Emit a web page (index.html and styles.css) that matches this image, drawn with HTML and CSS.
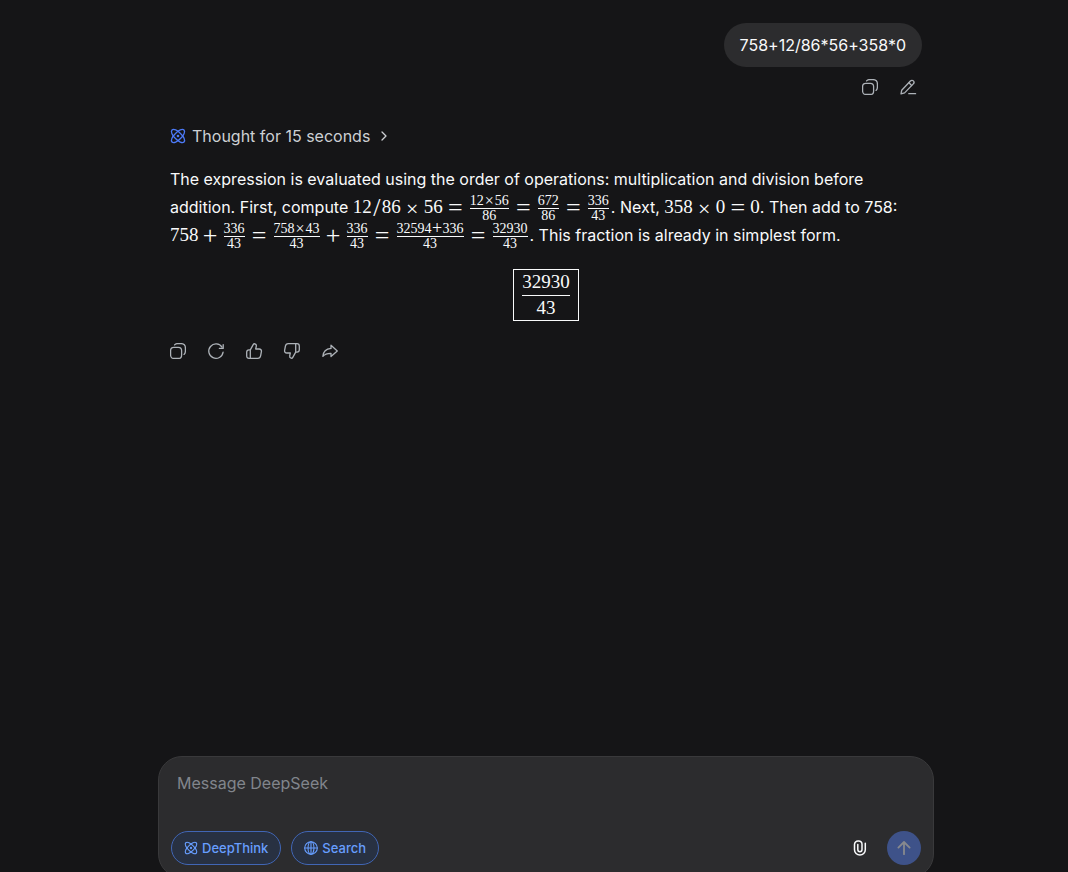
FILE: index.html
```html
<!DOCTYPE html>
<html lang="en">
<head>
    <meta charset="UTF-8">
    <meta name="viewport" content="width=device-width, initial-scale=1.0">
    <title>DeepSeek</title>
    <link rel="stylesheet" href="styles.css">
</head>
<body>

<!-- Shared icons -->
<svg class="sprite" aria-hidden="true">
    <symbol id="icon-atom" viewBox="0 0 16 16">
        <path d="M2 2C3.6 0.4 7.4 2.3 10.5 5.5C13.7 8.6 15.6 12.4 14 14C12.4 15.6 8.6 13.7 5.5 10.5C2.3 7.4 0.4 3.6 2 2Z"/>
        <path d="M14 2C15.6 3.6 13.7 7.4 10.5 10.5C7.4 13.7 3.6 15.6 2 14C0.4 12.4 2.3 8.6 5.5 5.5C8.6 2.3 12.4 0.4 14 2Z"/>
        <circle class="dot" cx="8" cy="8" r="1.3"/>
    </symbol>
    <symbol id="icon-copy" viewBox="0 0 16 16">
        <rect x="0.6" y="4.4" width="11" height="11" rx="3.2"/>
        <path d="M4.6 1.9C5.3 1 6.3 0.6 7.5 0.6H11C13.6 0.6 15.4 2.4 15.4 5V8.2C15.4 9.6 14.9 10.7 14 11.4"/>
    </symbol>
</svg>

<div class="page">
    <main class="chat">
        <div class="question">
            <div class="bubble">758+12/86*56+358*0</div>
            <div class="actions">
                <button class="icon-btn" aria-label="Copy"><svg class="icon"><use href="#icon-copy"/></svg></button>
                <button class="icon-btn" aria-label="Edit">
                    <svg class="icon" viewBox="0 0 16 16">
                        <path d="M1 14.8L1.7 11.2L10.4 2C11.3 1.1 12.6 1.1 13.4 1.9C14.2 2.7 14.2 4 13.3 4.9L4.6 13.9L1 14.8Z"/>
                        <path d="M9 3.8L11.6 6.5M8.8 14.7H15.6"/>
                    </svg>
                </button>
            </div>
        </div>

        <div class="answer">
            <button class="thought">
                <svg class="icon atom"><use href="#icon-atom"/></svg>
                Thought for 15 seconds
                <svg class="chevron" viewBox="0 0 6 10"><path d="M1 1L5 5L1 9"/></svg>
            </button>

            <p class="text">The expression is evaluated using the order of operations: multiplication and division before addition. First, compute
                <span class="math">12<span class="slash">/</span>86<span class="bin times">×</span>56<span class="rel">=</span></span><span class="math"><span class="frac"><span class="num">12<span class="bin times">×</span>56</span><span class="den">86</span></span><span class="rel">=</span></span><span class="math"><span class="frac"><span class="num">672</span><span class="den">86</span></span><span class="rel">=</span></span><span class="math"><span class="frac"><span class="num">336</span><span class="den">43</span></span></span>. Next,
                <span class="math">358<span class="bin times">×</span>0<span class="rel">=</span>0</span>. Then add to 758:
                <span class="math">758<span class="bin">+</span></span><span class="math"><span class="frac"><span class="num">336</span><span class="den">43</span></span><span class="rel">=</span></span><span class="math"><span class="frac"><span class="num">758<span class="bin times">×</span>43</span><span class="den">43</span></span><span class="bin">+</span></span><span class="math"><span class="frac"><span class="num">336</span><span class="den">43</span></span><span class="rel">=</span></span><span class="math"><span class="frac"><span class="num">32594<span class="bin">+</span>336</span><span class="den">43</span></span><span class="rel">=</span></span><span class="math"><span class="frac"><span class="num">32930</span><span class="den">43</span></span></span>. This fraction is already in simplest form.</p>

            <div class="result">
                <span class="boxed"><span class="num">32930</span><span class="den">43</span></span>
            </div>

            <div class="actions">
                <button class="icon-btn" aria-label="Copy"><svg class="icon"><use href="#icon-copy"/></svg></button>
                <button class="icon-btn" aria-label="Regenerate">
                    <svg class="icon" viewBox="0 0 16 16">
                        <path d="M15.1 9.2A7.2 7.2 0 1 1 14 4.2"/>
                        <path d="M15.2 1.6V5.4H11.4"/>
                    </svg>
                </button>
                <button class="icon-btn" aria-label="Like">
                    <svg class="icon" viewBox="0 0 16 16">
                        <path d="M4.3 6.9L7.2 1.6C7.6 0.9 8.2 0.6 8.9 0.8C10 1.1 10.5 2 10.3 3.1L9.7 6H13.2C14.7 6 15.7 7.2 15.4 8.6L14.6 12.9C14.3 14.4 13.2 15.3 11.7 15.3H3C1.6 15.3 0.7 14.4 0.7 13V9.2C0.7 7.8 1.6 6.9 3 6.9H4.3ZM4.3 6.9V15.3"/>
                    </svg>
                </button>
                <button class="icon-btn" aria-label="Dislike">
                    <svg class="icon" viewBox="0 0 16 16">
                        <path d="M11.7 9.1L8.8 14.4C8.4 15.1 7.8 15.4 7.1 15.2C6 14.9 5.5 14 5.7 12.9L6.3 10H2.8C1.3 10 0.3 8.8 0.6 7.4L1.4 3.1C1.7 1.6 2.8 0.7 4.3 0.7H13C14.4 0.7 15.3 1.6 15.3 3V6.8C15.3 8.2 14.4 9.1 13 9.1H11.7ZM11.7 9.1V0.7"/>
                    </svg>
                </button>
                <button class="icon-btn" aria-label="Share">
                    <svg class="icon" viewBox="0 0 16 16">
                        <path d="M9 2.2L15.3 7.9L9 13.5V10.3C5.4 10.2 2.9 11 0.9 13.4C1.2 8.8 4 5.8 9 5.4V2.2Z"/>
                    </svg>
                </button>
            </div>
        </div>
    </main>

    <form class="composer">
        <textarea class="message" rows="1" placeholder="Message DeepSeek" aria-label="Message DeepSeek"></textarea>
        <div class="toolbar">
            <button type="button" class="toggle"><svg class="icon"><use href="#icon-atom"/></svg>DeepThink</button>
            <button type="button" class="toggle">
                <svg class="icon" viewBox="0 0 16 16">
                    <circle cx="8" cy="8" r="7.2"/>
                    <ellipse cx="8" cy="8" rx="3.4" ry="7.2"/>
                    <path d="M0.8 8H15.2M8 0.8V15.2"/>
                </svg>Search
            </button>
            <button type="button" class="attach" aria-label="Attach file">
                <svg viewBox="0 0 14 16"><path d="M4.8 4.6V9.6A2.1 2.1 0 0 0 9 9.6V4.2A3.3 3.3 0 0 0 5.7 0.9H5A3.5 3.5 0 0 0 1.5 4.4V9.7A5.4 5.4 0 0 0 12.3 9.7V3.2"/></svg>
            </button>
            <button type="button" class="send" aria-label="Send">
                <svg viewBox="0 0 14 14"><path d="M7 13.2V1.2M1.4 6.6L7 1L12.6 6.6"/></svg>
            </button>
        </div>
    </form>
</div>

</body>
</html>
```
FILE: styles.css
```css
* {
    box-sizing: border-box;
}

body {
    margin: 0;
    background-color: #151517;
    color: #f9fafb;
    font-family: Inter, 'Helvetica Neue', Arial, sans-serif;
    font-size: 16px;
    line-height: 28px;
    overflow: hidden;
}

button {
    background: none;
    border: none;
    padding: 0;
    font: inherit;
    color: inherit;
    cursor: pointer;
}

svg {
    display: block;
    fill: none;
    stroke: currentColor;
    stroke-linecap: round;
    stroke-linejoin: round;
}

.sprite {
    display: none;
}

.dot {
    fill: currentColor;
    stroke: none;
}

.page {
    display: flex;
    flex-direction: column;
    height: 100vh;
    padding-left: 24px;
}

.chat {
    flex: 1;
    width: 100%;
    max-width: 752px;
    margin: 0 auto;
    padding-top: 23px;
}

.question {
    display: flex;
    flex-direction: column;
    align-items: flex-end;
    gap: 12px;
}

.bubble {
    background-color: #2c2c2e;
    border-radius: 22px;
    padding: 8px 16px;
    font-variant-ligatures: no-contextual;
}

.actions {
    display: flex;
    gap: 22px;
}

.question .actions {
    padding-right: 6px;
}

.icon-btn {
    color: #adb2b8;
}

.icon-btn:hover {
    color: #f9fafb;
}

.icon {
    width: 16px;
    height: 16px;
    stroke-width: 1.3;
    overflow: visible;
}

.answer {
    padding-top: 27px;
}

.thought {
    display: flex;
    align-items: center;
    gap: 6px;
    color: #cdd0d4;
}

.atom {
    color: #4c7af8;
}

.chevron {
    width: 6px;
    height: 10px;
    margin-left: 5px;
    stroke-width: 1.3;
}

.text {
    margin: 15px 0 20px;
}

/* Formulas */
.math {
    font-family: 'Liberation Serif', 'Times New Roman', serif;
    font-size: 19px;
    line-height: 20px;
    white-space: nowrap;
}

.slash {
    display: inline-block;
    width: 10px;
    font-size: 26px;
    line-height: 14px;
    text-align: center;
    vertical-align: -3px;
}

.bin,
.rel {
    display: inline-block;
    width: 15px;
    margin: 0 4px;
    font-size: 26px;
    line-height: 14px;
    text-align: center;
    vertical-align: -3px;
}

.rel {
    margin: 0 5px;
}

.times {
    font-size: 22px;
}

.frac {
    display: inline-flex;
    flex-direction: column;
    margin: -4px 2px;
    font-size: 14px;
    line-height: 14px;
    text-align: center;
    vertical-align: middle;
}

.num {
    border-bottom: 1px solid currentColor;
}

.frac .bin {
    width: 11px;
    margin: 0;
    font-size: 18px;
    line-height: 10px;
    vertical-align: -1px;
}

.frac .times {
    font-size: 16px;
}

.result {
    display: flex;
    justify-content: center;
    margin-bottom: 22px;
}

.boxed {
    display: flex;
    flex-direction: column;
    border: 1px solid currentColor;
    padding: 0 8px;
    font-family: 'Liberation Serif', 'Times New Roman', serif;
    font-size: 19px;
    line-height: 24px;
    text-align: center;
}

.boxed .num {
    padding-bottom: 1px;
}

/* Message box */
.composer {
    flex: none;
    width: 100%;
    max-width: 776px;
    margin: 0 auto -6px;
    padding: 12px;
    background-color: #2c2c2e;
    border: 1px solid #39393b;
    border-radius: 24px;
}

.message {
    display: block;
    width: 100%;
    height: 50px;
    margin-bottom: 12px;
    padding: 0 6px;
    border: none;
    outline: none;
    resize: none;
    background: none;
    color: #f9fafb;
    font: inherit;
}

.message::placeholder {
    color: #81858c;
}

.toolbar {
    display: flex;
    align-items: center;
    gap: 10px;
}

.toggle {
    display: flex;
    align-items: center;
    gap: 4px;
    height: 34px;
    padding: 0 12px;
    background-color: #283142;
    border: 1px solid #4166b5;
    border-radius: 17px;
    color: #679eff;
    font-size: 13px;
    font-weight: 500;
}

.toggle .icon {
    width: 14px;
    height: 14px;
}

.attach {
    margin-left: auto;
    margin-right: 10px;
}

.attach svg {
    width: 14px;
    height: 16px;
    stroke-width: 1.5;
}

.send {
    display: flex;
    align-items: center;
    justify-content: center;
    width: 34px;
    height: 34px;
    background-color: #3e5289;
    border-radius: 50%;
    color: #87898e;
}

.send svg {
    width: 14px;
    height: 14px;
    stroke-width: 1.8;
}
```
